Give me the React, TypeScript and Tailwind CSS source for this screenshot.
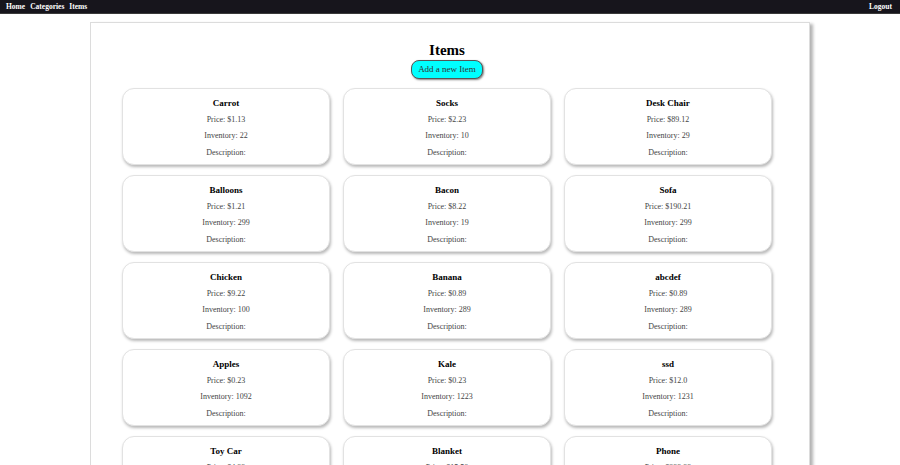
const items = [
  { name: 'Carrot', price: '1.13', inventory: 22 },
  { name: 'Socks', price: '2.23', inventory: 10 },
  { name: 'Desk Chair', price: '89.12', inventory: 29 },
  { name: 'Balloons', price: '1.21', inventory: 299 },
  { name: 'Bacon', price: '8.22', inventory: 19 },
  { name: 'Sofa', price: '190.21', inventory: 299 },
  { name: 'Chicken', price: '9.22', inventory: 100 },
  { name: 'Banana', price: '0.89', inventory: 289 },
  { name: 'abcdef', price: '0.89', inventory: 289 },
  { name: 'Apples', price: '0.23', inventory: 1092 },
  { name: 'Kale', price: '0.23', inventory: 1223 },
  { name: 'ssd', price: '12.0', inventory: 1231 },
  { name: 'Toy Car', price: '4.99', inventory: 12 },
  { name: 'Blanket', price: '15.50', inventory: 40 },
  { name: 'Phone', price: '299.99', inventory: 8 },
];

function ItemCard({ name, price, inventory }: { name: string; price: string; inventory: number }) {
  return (
    <div className="h-[77px] rounded-[12px] border border-[#e2e2e2] bg-white pt-[6px] text-center shadow-[1px_2px_3px_rgba(0,0,0,0.28)]">
      <div className="text-[9px] font-bold leading-[16.5px] text-black">{name}</div>
      <div className="text-[8px] leading-[16.5px] text-[#444]">Price: ${price}</div>
      <div className="text-[8px] leading-[16.5px] text-[#444]">Inventory: {inventory}</div>
      <div className="text-[8px] leading-[16.5px] text-[#444]">Description:</div>
    </div>
  );
}

export default function App() {
  return (
    <div className="min-h-screen bg-white font-['Liberation_Serif',serif]">
      <nav className="flex h-[14px] items-center justify-between border-b border-[#3a3a3a] bg-[#17151c] px-[6px] text-[7.5px] font-bold text-white">
        <div className="flex gap-[5px]">
          <span>Home</span>
          <span>Categories</span>
          <span>Items</span>
        </div>
        <span className="mr-[2px]">Logout</span>
      </nav>

      <div className="mx-auto mt-[8px] w-[720px] border border-[#dcdcdc] bg-white pb-[20px] pl-[31px] pr-[37px] pt-[18px] shadow-[3px_2px_3px_rgba(0,0,0,0.3)]">
        <h1 className="text-center text-[15px] font-bold leading-[18px] text-black">Items</h1>
        <div className="mt-[1px] flex justify-center">
          <button className="h-[19px] rounded-[8px] border border-[#555] bg-[#00ffff] px-[6px] text-[9px] leading-none text-[#333] shadow-[1px_1px_2px_rgba(0,0,0,0.5)]">
            Add a new Item
          </button>
        </div>
        <div className="mt-[9px] grid grid-cols-3 gap-x-[13px] gap-y-[10px]">
          {items.map((it) => (
            <ItemCard key={it.name} {...it} />
          ))}
        </div>
      </div>
    </div>
  );
}
